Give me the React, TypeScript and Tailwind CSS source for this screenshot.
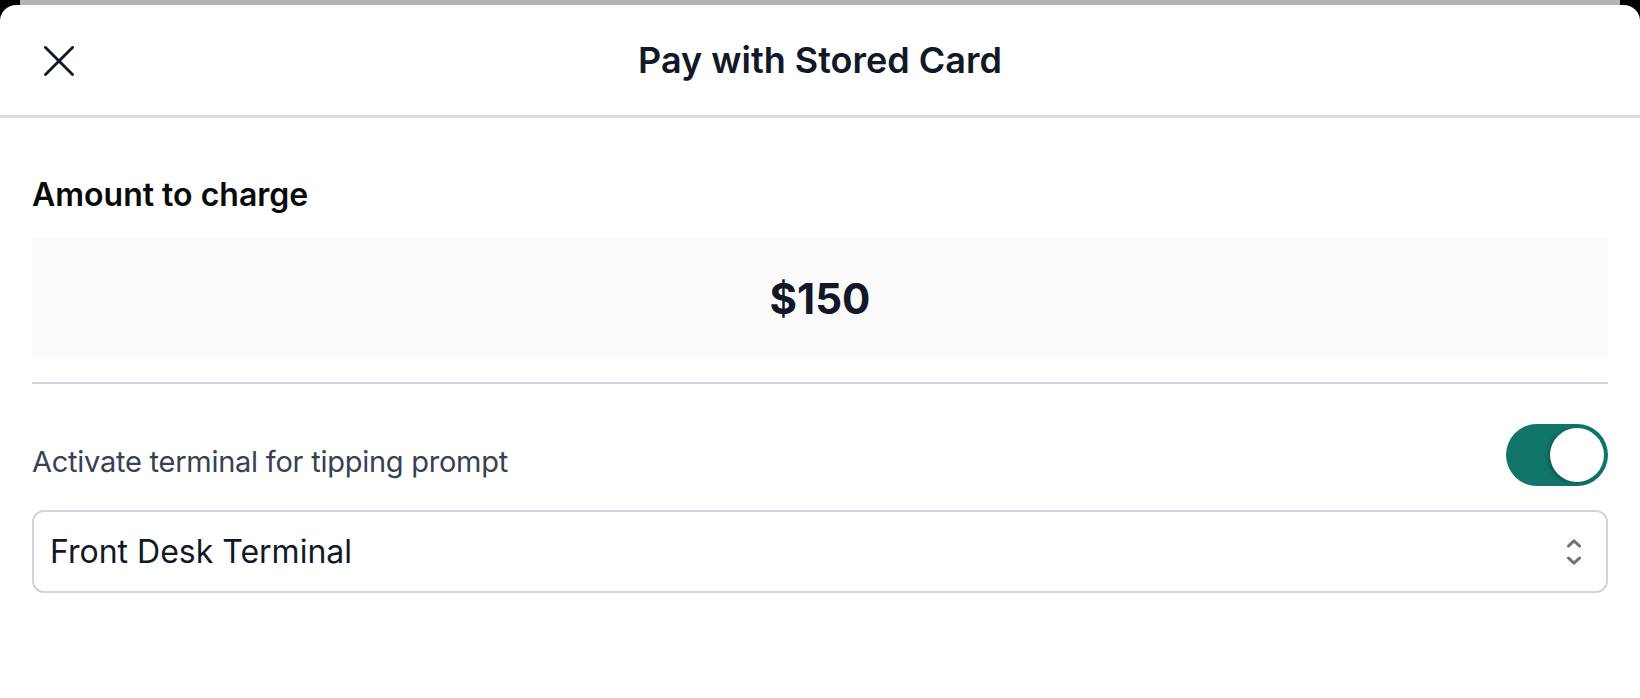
export default function App() {
  return (
    <div className="w-[1640px] h-[698px] bg-black flex flex-col overflow-hidden font-['Inter','Noto_Sans',sans-serif]">
      <div className="h-[5px] mx-5 bg-[#b3b3b3] shrink-0" />
      <div className="flex-1 bg-white rounded-t-[16px] flex flex-col">
        <div className="h-[113px] grid grid-cols-[1fr_auto_1fr] items-center border-b-[3px] border-[#dcdcdc] shrink-0">
          <div className="pl-[44px] flex items-center pt-[1px]">
            <svg width="30" height="30" viewBox="0 0 30 30" fill="none">
              <line x1="1.5" y1="1.5" x2="28.5" y2="28.5" stroke="#111827" strokeWidth="2.9" strokeLinecap="round" />
              <line x1="28.5" y1="1.5" x2="1.5" y2="28.5" stroke="#111827" strokeWidth="2.9" strokeLinecap="round" />
            </svg>
          </div>
          <div className="text-[36px] leading-[42px] font-semibold text-[#111827]">Pay with Stored Card</div>
          <div />
        </div>
        <div className="px-8 pt-[57px] flex flex-col">
          <div className="text-[32px] leading-[40px] font-semibold text-[#0a0a0a]">Amount to charge</div>
          <div className="mt-[23px] h-[120px] bg-[#fafafa] flex items-center justify-center text-[42px] font-bold text-[#111827]">
            $150
          </div>
          <div className="mt-6 h-[2px] bg-[#d1d5db]" />
          <div className="mt-10 flex items-center justify-between">
            <div className="text-[29px] leading-[36px] tracking-[-0.25px] text-[#374151] pt-[13px]">Activate terminal for tipping prompt</div>
            <div className="w-[102px] h-[62px] rounded-full bg-[#11756a] p-1 flex justify-end">
              <div className="w-[54px] h-[54px] rounded-full bg-white shadow-[-2px_1px_4px_rgba(0,0,0,0.25)]" />
            </div>
          </div>
          <div className="mt-6 h-[83px] border-2 border-[#d1d5db] rounded-[12px] flex items-center justify-between pl-4 pr-6">
            <div className="text-[32px] leading-[40px] text-[#111827]">Front Desk Terminal</div>
            <svg width="16" height="26" viewBox="0 0 16 26" fill="none">
              <path d="M2.5 7 L8 1.8 L13.5 7" stroke="#6b7280" strokeWidth="3" strokeLinecap="round" strokeLinejoin="round" />
              <path d="M2.5 19 L8 24.2 L13.5 19" stroke="#6b7280" strokeWidth="3" strokeLinecap="round" strokeLinejoin="round" />
            </svg>
          </div>
        </div>
      </div>
    </div>
  );
}
